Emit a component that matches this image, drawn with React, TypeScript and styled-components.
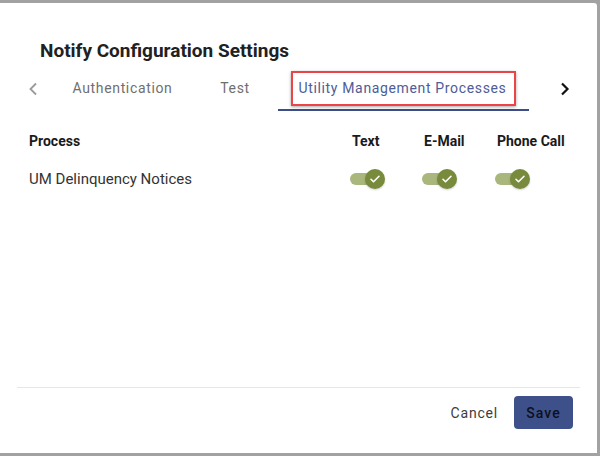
import React from "react";
import styled, { createGlobalStyle } from "styled-components";

const Global = createGlobalStyle`
  html, body { margin: 0; padding: 0; background: #a2a2a2; }
  body { font-family: Roboto, "Noto Sans", Arial, sans-serif; }
  * { box-sizing: border-box; }
`;

const Dialog = styled.div`
  margin-top: 3px;
  width: 597px;
  height: 450px;
  background: #ffffff;
  border-top-right-radius: 3px;
  display: flex;
  flex-direction: column;
`;

const Title = styled.h2`
  margin: 37px 0 0 40px;
  font-size: 19px;
  line-height: 22px;
  font-weight: 700;
  color: #212121;
`;

const TabRow = styled.div`
  margin: 4px 0 0 13px;
  height: 45px;
  display: flex;
  align-items: stretch;
  overflow: hidden;
`;

const ScrollBtn = styled.div<{ $w: number; $dark?: boolean }>`
  flex: 0 0 ${(p) => p.$w}px;
  display: flex;
  align-items: center;
  justify-content: center;
  color: ${(p) => (p.$dark ? "#111" : "#9a9a9a")};
`;

const Tab = styled.div<{ $w: number; $active?: boolean }>`
  flex: 0 0 ${(p) => p.$w}px;
  display: flex;
  align-items: center;
  justify-content: center;
  font-size: 14px;
  letter-spacing: 0.65px;
  font-weight: 400;
  color: ${(p) => (p.$active ? "#4e5c99" : "#6f6f6f")};
  border-bottom: 2px solid ${(p) => (p.$active ? "#3d4d88" : "transparent")};
`;

const Highlight = styled.span`
  border: 2px solid #ec4446;
  box-shadow: 0 1px 3px rgba(0, 0, 0, 0.35);
  padding: 7px 8px 8px 6px;
  margin-top: 2px;
`;

const Body = styled.div`
  flex: 1;
  padding: 20px 0 0 29px;
`;

const Grid = styled.div`
  display: grid;
  grid-template-columns: 323px 72px 73px auto;
  row-gap: 16px;
  align-items: center;
`;

const HeadCell = styled.div`
  font-size: 14px;
  line-height: 20px;
  font-weight: 700;
  color: #1a1a1a;
`;

const Cell = styled.div`
  font-size: 15px;
  line-height: 24px;
  color: #333;
  height: 24px;
  display: flex;
  align-items: center;
`;

const Track = styled.div`
  position: relative;
  width: 30px;
  height: 12px;
  margin-left: -2px;
  border-radius: 6px;
  background: #a9b67c;
`;

const Thumb = styled.div`
  position: absolute;
  left: 15px;
  top: -4px;
  width: 20px;
  height: 20px;
  border-radius: 50%;
  background: #788a3c;
  display: flex;
  align-items: center;
  justify-content: center;
  box-shadow: 0 1px 2px rgba(0, 0, 0, 0.2);
`;

const Footer = styled.div`
  margin: 0 17px;
  border-top: 1px solid #e6e6e6;
  padding: 8px 7px 24px 0;
  display: flex;
  justify-content: flex-end;
  align-items: center;
  gap: 16px;
`;

const CancelBtn = styled.button`
  border: none;
  background: transparent;
  font-family: inherit;
  font-size: 14px;
  letter-spacing: 0.8px;
  color: #3c3c3c;
  padding: 0;
  height: 33px;
`;

const SaveBtn = styled.button`
  border: none;
  background-color: #3e5089;
  border-radius: 4px;
  width: 59px;
  height: 33px;
  font-family: inherit;
  font-size: 14px;
  font-weight: 500;
  letter-spacing: 1px;
  color: #0c1020;
  padding: 0;
`;

const Toggle = () => (
  <Track>
    <Thumb>
      <svg width="12" height="12" viewBox="0 0 24 24" fill="none">
        <path d="M4 12.5l5 5L20 6.5" stroke="#fff" strokeWidth="3.2" strokeLinecap="round" strokeLinejoin="round" />
      </svg>
    </Thumb>
  </Track>
);

export default function App() {
  return (
    <>
      <Global />
      <Dialog>
        <Title>Notify Configuration Settings</Title>
        <TabRow>
          <ScrollBtn $w={40}>
            <svg width="10" height="14" viewBox="0 0 10 14">
              <path d="M8 1.5L2.5 7 8 12.5" stroke="currentColor" strokeWidth="1.8" fill="none" />
            </svg>
          </ScrollBtn>
          <Tab $w={139}>Authentication</Tab>
          <Tab $w={86}>Test</Tab>
          <Tab $w={251} $active>
            <Highlight>Utility Management Processes</Highlight>
          </Tab>
          <ScrollBtn $w={72} $dark>
            <svg width="10" height="14" viewBox="0 0 10 14">
              <path d="M2 1.5L7.5 7 2 12.5" stroke="currentColor" strokeWidth="2.2" fill="none" />
            </svg>
          </ScrollBtn>
        </TabRow>
        <Body>
          <Grid>
            <HeadCell>Process</HeadCell>
            <HeadCell>Text</HeadCell>
            <HeadCell>E-Mail</HeadCell>
            <HeadCell>Phone Call</HeadCell>
            <Cell>UM Delinquency Notices</Cell>
            <Cell><Toggle /></Cell>
            <Cell><Toggle /></Cell>
            <Cell><Toggle /></Cell>
          </Grid>
        </Body>
        <Footer>
          <CancelBtn>Cancel</CancelBtn>
          <SaveBtn>Save</SaveBtn>
        </Footer>
      </Dialog>
    </>
  );
}
